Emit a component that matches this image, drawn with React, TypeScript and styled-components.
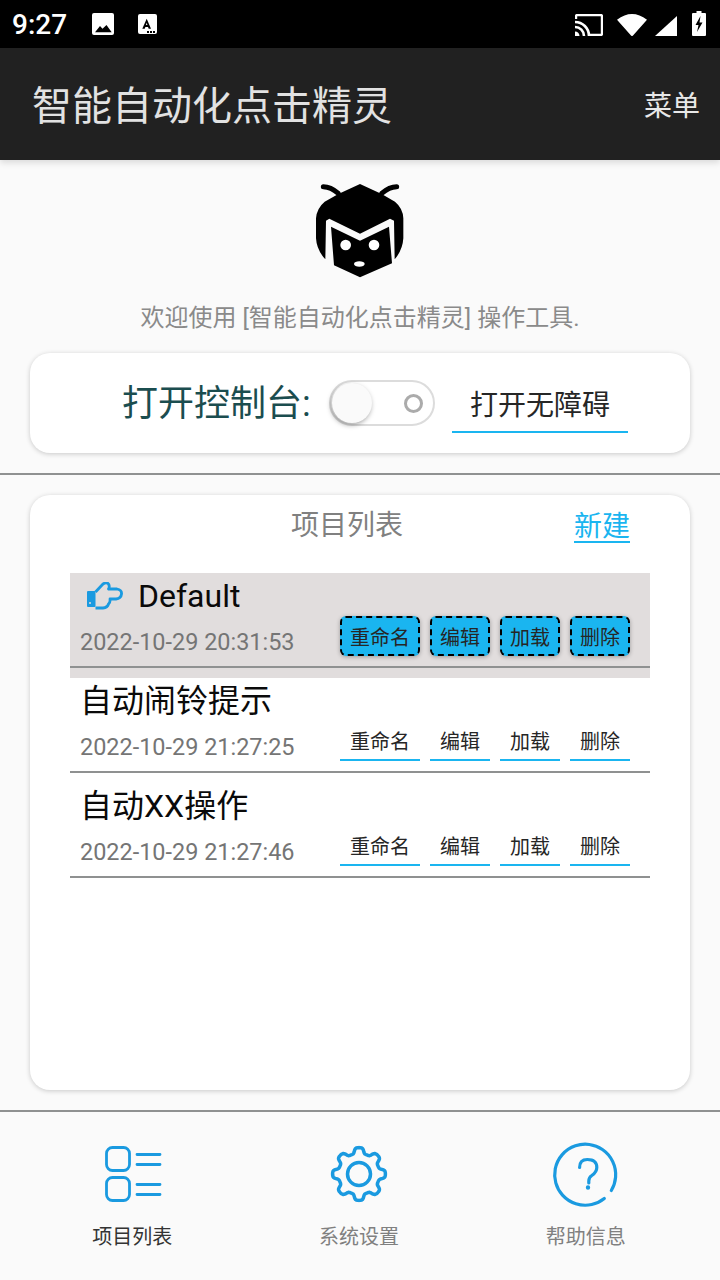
import React from "react";
import styled, { createGlobalStyle } from "styled-components";

const FONT = `Roboto, "Noto Sans CJK SC", sans-serif`;
const BLUE = "#1ab5f0";
const ICON = "#1a9ae0";

const Global = createGlobalStyle`
  html, body { margin: 0; padding: 0; background: #fafafa; }
  body { font-family: ${FONT}; }
  * { box-sizing: border-box; }
`;

const Screen = styled.div`
  width: 720px;
  height: 1280px;
  display: flex;
  flex-direction: column;
  background: #fafafa;
  overflow: hidden;
`;

const StatusBar = styled.div`
  height: 48px;
  flex: none;
  background: #000;
  display: flex;
  align-items: center;
  padding: 0 14px 0 12px;
  color: #fff;
`;

const Clock = styled.span`
  font-size: 28px;
  font-weight: 500;
  width: 80px;
`;

const StatusLeft = styled.div`
  display: flex;
  align-items: center;
  gap: 24px;
  flex: 1;
`;

const StatusRight = styled.div`
  display: flex;
  align-items: flex-end;
  height: 26px;
  margin-top: -2px;
`;

const StatusGlyph = styled.svg<{ $gap?: number }>`
  display: block;
  flex: none;
  margin-left: ${(p) => p.$gap ?? 0}px;
`;

const AppBar = styled.header`
  height: 112px;
  flex: none;
  background: #212121;
  display: flex;
  align-items: center;
  justify-content: space-between;
  padding: 0 20px 0 32px;
  box-shadow: 0 3px 6px rgba(0, 0, 0, 0.12);
  z-index: 1;
`;

const AppTitle = styled.h1`
  margin: 0 0 2px;
  font-size: 40px;
  font-weight: 400;
  color: #e2e2e2;
`;

const AppMenu = styled.span`
  font-size: 28px;
  color: #e8e8e8;
`;

const Body = styled.main`
  flex: 1;
  display: flex;
  flex-direction: column;
  align-items: center;
`;

const Logo = styled.svg`
  display: block;
  margin-top: 10px;
  width: 160px;
  height: 120px;
`;

const Welcome = styled.p`
  margin: 11px 0 0;
  height: 33px;
  line-height: 34px;
  font-size: 24px;
  color: #8a8a8a;
`;

const Card = styled.section`
  width: 660px;
  background: #fff;
  border-radius: 20px;
  box-shadow: 0 1px 5px rgba(0, 0, 0, 0.2);
`;

const ConsoleCard = styled(Card)`
  height: 100px;
  margin-top: 19px;
  display: flex;
  align-items: center;
  padding-left: 92px;
`;

const ConsoleLabel = styled.span`
  font-size: 36px;
  line-height: 44px;
  margin-top: 2px;
  color: #1b4d4f;
  width: 207px;
  white-space: nowrap;
`;

const SwitchTrack = styled.div`
  width: 106px;
  height: 46px;
  border: 2px solid #dcdcdc;
  border-radius: 23px;
  display: flex;
  align-items: center;
  justify-content: space-between;
  padding: 0 10px 0 1px;
`;

const SwitchThumb = styled.div`
  width: 40px;
  height: 40px;
  border-radius: 50%;
  background: #fafafa;
  box-shadow: -1px 2px 5px rgba(0, 0, 0, 0.35);
`;

const SwitchRing = styled.div`
  width: 19px;
  height: 19px;
  border-radius: 50%;
  border: 3.5px solid #ababab;
`;

const UnderlinedButton = styled.button<{ $active?: boolean; $w: number; $h: number; $size: number }>`
  width: ${(p) => p.$w}px;
  height: ${(p) => p.$h}px;
  padding: 0;
  font-family: ${FONT};
  font-size: ${(p) => p.$size}px;
  color: #262626;
  flex: none;
  border-radius: ${(p) => (p.$active ? "6px" : "0")};
  background: ${(p) => (p.$active ? BLUE : "transparent")};
  border: ${(p) => (p.$active ? "2px dashed #000" : "none")};
  border-bottom: ${(p) => (p.$active ? "2px dashed #000" : `2px solid ${BLUE}`)};
  box-shadow: ${(p) => (p.$active ? "0 1px 4px rgba(0,0,0,0.3)" : "none")};
`;

const A11yButton = styled(UnderlinedButton)`
  margin-left: 17px;
  margin-top: 3px;
  padding-bottom: 2px;
`;

const Rule = styled.div`
  width: 720px;
  height: 2px;
  flex: none;
  background: #8f9191;
`;

const TopRule = styled(Rule)`
  margin-top: 20px;
`;

const ProjectCard = styled(Card)`
  height: 595px;
  margin-top: 20px;
  padding: 0 40px;
`;

const ProjectHead = styled.div`
  height: 78px;
  display: flex;
  padding-top: 11px;
  align-items: flex-start;
  justify-content: space-between;
`;

const ProjectTitle = styled.span`
  font-size: 28px;
  line-height: 40px;
  color: #808080;
  margin-left: 221px;
`;

const NewLink = styled.span`
  font-size: 28px;
  line-height: 28px;
  margin-top: 7px;
  color: ${BLUE};
  border-bottom: 2px solid ${BLUE};
  margin-right: 20px;
`;

const Row = styled.div<{ $selected?: boolean }>`
  height: 105px;
  background: ${(p) => (p.$selected ? "#e1dddd" : "transparent")};
`;

const RowBody = styled.div`
  height: 95px;
  border-bottom: 2px solid #8f9191;
  display: flex;
  flex-direction: column;
`;

const NameLine = styled.div`
  height: 45px;
  display: flex;
  align-items: center;
  padding-left: 10px;
`;

const Pointer = styled.svg`
  display: block;
  width: 36px;
  height: 28px;
  margin: 0 15px 0 7px;
`;

const Name = styled.span`
  font-size: 32px;
  line-height: 40px;
  color: #0a0a0a;
`;

const MetaLine = styled.div`
  display: flex;
  align-items: flex-start;
  justify-content: space-between;
  padding: 0 20px 0 10px;
`;

const Stamp = styled.span`
  font-size: 23.45px;
  line-height: 48px;
  color: #757575;
`;

const Actions = styled.div`
  display: flex;
  gap: 10px;
  margin-top: -2px;
`;

const BottomRule = styled(Rule)`
  margin-top: 20px;
`;

const TabBar = styled.nav`
  height: 168px;
  flex: none;
  display: grid;
  grid-template-columns: repeat(3, 1fr);
  padding: 0 20px;
`;

const Tab = styled.div<{ $active?: boolean }>`
  display: flex;
  flex-direction: column;
  align-items: center;
  padding-top: 29px;
  font-size: 20px;
  color: ${(p) => (p.$active ? "#333" : "#808080")};
`;

const TabIcon = styled.svg`
  display: block;
  width: 70px;
  height: 70px;
`;

const TabLabel = styled.span`
  margin: 11px 2px 0 0;
  line-height: 30px;
`;

/* Gear outline sampled in polar form: eight rounded teeth around the hub. */
function gearPath(cx: number, cy: number) {
  const pts: string[] = [];
  for (let i = 0; i < 240; i++) {
    const t = (i / 240) * Math.PI * 2;
    const wave = Math.tanh(2 * Math.cos(8 * t));
    const r = 23.5 + 3 * wave;
    pts.push(`${(cx + r * Math.sin(t)).toFixed(2)} ${(cy - r * Math.cos(t)).toFixed(2)}`);
  }
  return `M${pts.join("L")}Z`;
}

const projects = [
  { name: "Default", time: "2022-10-29 20:31:53", selected: true },
  { name: "自动闹铃提示", time: "2022-10-29 21:27:25" },
  { name: "自动XX操作", time: "2022-10-29 21:27:46" },
];

const actions: [string, number][] = [
  ["重命名", 80],
  ["编辑", 60],
  ["加载", 60],
  ["删除", 60],
];

export default function App() {
  return (
    <Screen>
      <Global />
      <StatusBar>
        <Clock>9:27</Clock>
        <StatusLeft>
          <StatusGlyph width="22" height="22" viewBox="0 0 22 22">
            <rect width="22" height="22" rx="2" fill="#fff" />
            <path d="M3 19.300 8 13l2.500 2.800 4-3.800 5.200 7.300z" fill="#000" />
          </StatusGlyph>
          <StatusGlyph width="19" height="20" viewBox="0 0 19 20">
            <rect width="19" height="20" rx="2" fill="#fff" />
            <path d="M8.700 4.700 4.300 14.700h2.400l.7-1.800h2.600l.7 1.800H13L8.700 4.700zM8 11l.7-2.200.7 2.200z" fill="#000" />
            <path d="M9 17h2v2H9zM12 17h2v2h-2zM15 17h2v2h-2z" fill="#000" />
          </StatusGlyph>
        </StatusLeft>
        <StatusRight>
          <StatusGlyph width="28" height="22" viewBox="0 0 28 22">
            <path d="M1 5V2.500A1.500 1.500 0 0 1 2.500 1h23A1.500 1.500 0 0 1 27 2.500v17a1.500 1.500 0 0 1-1.500 1.500H15" fill="none" stroke="#fff" strokeWidth="2.400" />
            <path d="M0 8c7.500 0 14 6 14 14M0 13c5 0 9 4 9 9" fill="none" stroke="#fff" strokeWidth="2.600" />
            <path d="M0 17.500c2.500 0 4.500 2 4.500 4.500H0z" fill="#fff" />
          </StatusGlyph>
          <StatusGlyph $gap={14} width="30" height="22" viewBox="0 0 30 22">
            <path d="M0 5.700Q15-5.700 30 5.700L16 21.500a1.300 1.300 0 0 1-2 0z" fill="#fff" />
          </StatusGlyph>
          <StatusGlyph $gap={8} width="22" height="20" viewBox="0 0 22 20">
            <path d="M0 20 22 0v20z" fill="#fff" />
          </StatusGlyph>
          <StatusGlyph $gap={15} width="14" height="25" viewBox="0 0 14 25">
            <path d="M4.500 0h5v2H13a1 1 0 0 1 1 1v21a1 1 0 0 1-1 1H1a1 1 0 0 1-1-1V3a1 1 0 0 1 1-1h3.500z" fill="#fff" />
            <path d="M8.500 5 3.500 14h3L5 21l5.500-9.500H7.500z" fill="#000" />
          </StatusGlyph>
        </StatusRight>
      </StatusBar>

      <AppBar>
        <AppTitle>智能自动化点击精灵</AppTitle>
        <AppMenu>菜单</AppMenu>
      </AppBar>

      <Body>
        <Logo viewBox="0 0 480 360">
          <path d="M130 50Q152 50 175 70M350 50Q328 50 305 70" stroke="#000" strokeWidth="15" strokeLinecap="round" fill="none" />
          {/* helmet with its M-shaped visor edge */}
          <path d="M240 42 305 72 345 95Q369 115 370 145V205Q368 240 344 268L342 152 330 146 240 191 148 146 138 152 136 268Q110 240 108 205V145Q110 115 134 95L175 72Z" fill="#000" />
          {/* face */}
          <path d="M153 170 240 212 327 170 336 280 240 322 162 286Z" fill="#000" />
          <circle cx="197" cy="225" r="16" fill="#fff" />
          <circle cx="282" cy="225" r="16" fill="#fff" />
          <ellipse cx="238" cy="282" rx="16" ry="8" fill="#fff" />
        </Logo>
        <Welcome>欢迎使用 [智能自动化点击精灵] 操作工具.</Welcome>

        <ConsoleCard>
          <ConsoleLabel>打开控制台:</ConsoleLabel>
          <SwitchTrack>
            <SwitchThumb />
            <SwitchRing />
          </SwitchTrack>
          <A11yButton $w={176} $h={57} $size={28}>打开无障碍</A11yButton>
        </ConsoleCard>

        <TopRule />

        <ProjectCard>
          <ProjectHead>
            <ProjectTitle>项目列表</ProjectTitle>
            <NewLink>新建</NewLink>
          </ProjectHead>
          {projects.map((p) => (
            <Row key={p.time} $selected={p.selected}>
              <RowBody>
                <NameLine>
                  {p.selected && (
                    <Pointer viewBox="0 0 36 28">
                      <path d="M8.500 10 16 2Q19.500-.5 21.500 2 23 4.500 21.500 7H30Q35 8 34.500 12 34 16.500 29 17H23Q23.500 20 21.500 22 20.500 25.500 16 26H8.500" fill="none" stroke={ICON} strokeWidth="2.800" strokeLinejoin="round" />
                      <rect x="0" y="9" width="8.500" height="16" rx="1" fill={ICON} />
                      <circle cx="3" cy="21" r="1" fill="#e1dddd" />
                    </Pointer>
                  )}
                  <Name>{p.name}</Name>
                </NameLine>
                <MetaLine>
                  <Stamp>{p.time}</Stamp>
                  <Actions>
                    {actions.map(([label, w]) => (
                      <UnderlinedButton key={label} $active={p.selected} $w={w} $h={40} $size={20}>
                        {label}
                      </UnderlinedButton>
                    ))}
                  </Actions>
                </MetaLine>
              </RowBody>
            </Row>
          ))}
        </ProjectCard>

        <BottomRule />
      </Body>

      <TabBar>
        <Tab $active>
          <TabIcon viewBox="0 0 70 70">
            <g fill="none" stroke={ICON} strokeWidth="2.800" strokeLinecap="round">
              <rect x="8.500" y="6.500" width="23" height="23" rx="6" />
              <rect x="8.500" y="36.500" width="23" height="23" rx="6" />
              <path d="M39 13.500H62M39 23.500H62M39 43.500H62M39 53.500H62" />
            </g>
          </TabIcon>
          <TabLabel>项目列表</TabLabel>
        </Tab>
        <Tab>
          <TabIcon viewBox="0 0 70 70">
            <path d={gearPath(34, 33)} fill="none" stroke={ICON} strokeWidth="3.500" strokeLinejoin="round" />
            <circle cx="34" cy="33" r="11.500" fill="none" stroke={ICON} strokeWidth="3.500" />
          </TabIcon>
          <TabLabel>系统设置</TabLabel>
        </Tab>
        <Tab>
          <TabIcon viewBox="0 0 70 70">
            <g fill="none" stroke={ICON} strokeWidth="3.200" strokeLinecap="round" transform="translate(-.7 -2.500)">
              <path d="M53 60A30.500 30.500 0 1 1 60 52" />
              <path d="M28.300 29q0-8 7.700-8 9.500 0 9.500 8 0 4.500-5 8-3 2-3 5.500v2" />
              <circle cx="36.700" cy="49" r="1.200" fill={ICON} strokeWidth="2" />
            </g>
          </TabIcon>
          <TabLabel>帮助信息</TabLabel>
        </Tab>
      </TabBar>
    </Screen>
  );
}
